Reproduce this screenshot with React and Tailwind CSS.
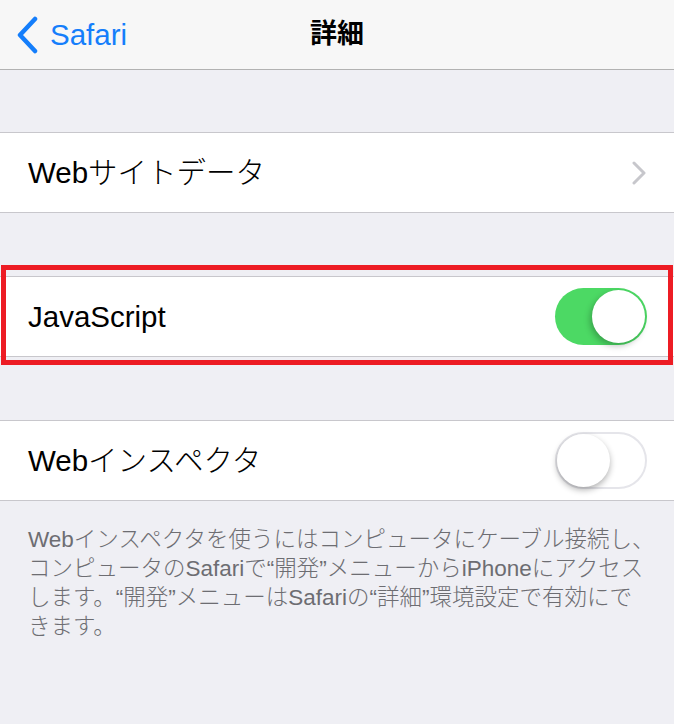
import React from "react";

const font = {
  fontFamily: '"Liberation Sans", "Noto Sans CJK JP", sans-serif',
};

function Toggle({ on }) {
  return on ? (
    <div className="relative w-[92px] h-[57px] rounded-full bg-[#4cd964]">
      <div className="absolute right-[2px] top-[2px] w-[53px] h-[53px] rounded-full bg-white shadow-[-2px_3px_6px_rgba(0,0,0,0.25)]" />
    </div>
  ) : (
    <div className="relative w-[92px] h-[57px] rounded-full bg-white border-2 border-[#e5e5ea]">
      <div className="absolute left-0 top-0 w-[53px] h-[53px] rounded-full bg-white shadow-[0px_3px_6px_rgba(0,0,0,0.3)]" />
    </div>
  );
}

function Row({ label, children }) {
  return (
    <div className="h-[81px] bg-white border-t border-b border-[#c8c7cc] flex items-center justify-between pl-[28px] pr-[27px]">
      <span className="text-[29.5px] text-black leading-none font-light">{label}</span>
      {children}
    </div>
  );
}

export default function App() {
  return (
    <div className="w-[674px] h-[724px] bg-[#efeff4] overflow-hidden" style={font}>
      {/* Nav bar */}
      <div className="relative h-[70px] bg-[#f7f7f7] border-b border-[#b2b2b2] flex items-center">
        <div className="flex items-center pl-[15px] gap-[11px] text-[#157efb]">
          <svg width="24" height="38" viewBox="0 0 24 38" fill="none">
            <path d="M20 3 L5 19 L20 35" stroke="#157efb" strokeWidth="4.5" strokeLinecap="round" strokeLinejoin="round" />
          </svg>
          <span className="text-[29.5px] leading-none">Safari</span>
        </div>
        <div className="absolute inset-0 flex items-center justify-center pointer-events-none">
          <span className="text-[27px] font-bold text-black leading-none">詳細</span>
        </div>
      </div>

      <div className="h-[62px]" />

      <Row label="Webサイトデータ">
        <svg width="16" height="24" viewBox="0 0 16 24" fill="none">
          <path d="M3 2 L13 12 L3 22" stroke="#c7c7cc" strokeWidth="3" strokeLinecap="round" strokeLinejoin="round" />
        </svg>
      </Row>

      <div className="h-[63px]" />

      {/* highlighted row */}
      <div className="relative">
        <Row label="JavaScript">
          <Toggle on />
        </Row>
        <div className="absolute left-[1px] right-[1px] top-[-11px] bottom-[-8px] border-[5px] border-[#ed1c24] pointer-events-none" />
      </div>

      <div className="h-[63px]" />

      <Row label="Webインスペクタ">
        <Toggle on={false} />
      </Row>

      <div className="pl-[28px] pt-[24px] text-[22.5px] leading-[29px] text-[#6d6d72] font-light">
        <div>Webインスペクタを使うにはコンピュータにケーブル接続し、</div>
        <div>コンピュータのSafariで“開発”メニューからiPhoneにアクセス</div>
        <div>します。“開発”メニューはSafariの“詳細”環境設定で有効にで</div>
        <div>きます。</div>
      </div>
    </div>
  );
}
